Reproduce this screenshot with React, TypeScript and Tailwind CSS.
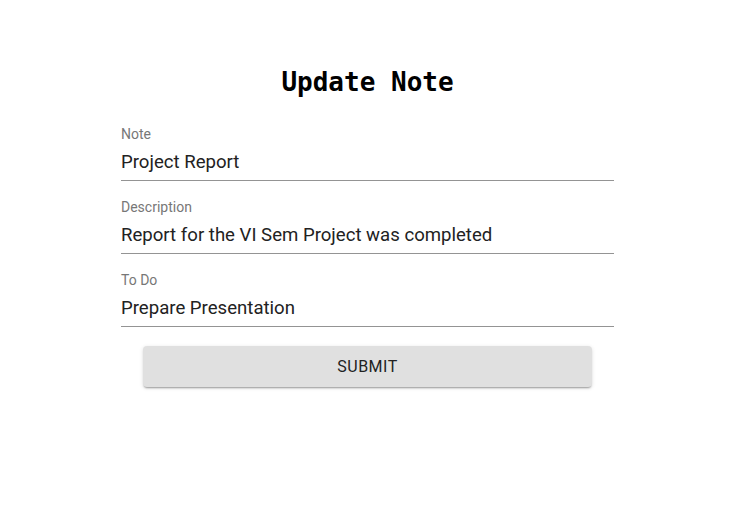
import React from 'react';

const fields = [
  { label: 'Note', value: 'Project Report' },
  { label: 'Description', value: 'Report for the VI Sem Project was completed' },
  { label: 'To Do', value: 'Prepare Presentation' },
];

const App: React.FC = () => {
  return (
    <div className="min-h-[520px] w-full bg-white font-['Roboto',sans-serif]">
      <div className="ml-[121px] w-[493px] pt-[63px]">
        <h1 className="text-center font-['DejaVu_Sans_Mono',monospace] text-[26px] font-bold leading-[38px] text-black">
          Update Note
        </h1>

        <div className="mt-[25px] flex flex-col gap-[18px]">
          {fields.map((f) => (
            <div key={f.label} className="flex flex-col">
              <label className="text-[14px] leading-[16px] text-[#777]">{f.label}</label>
              <div className="mt-[8px] border-b border-[#949494] pb-[6px] text-[18.6px] leading-[24px] text-[#222]">
                {f.value}
              </div>
            </div>
          ))}
        </div>

        <div className="mt-[19px] flex justify-center">
          <button className="h-[41px] w-[449px] rounded-[4px] bg-[#e0e0e0] text-[16px] leading-[20px] tracking-[0.5px] text-[#222] shadow-[0_2px_2px_-1px_rgba(0,0,0,0.35),0_1px_4px_rgba(0,0,0,0.12)]">
            SUBMIT
          </button>
        </div>
      </div>
    </div>
  );
};

export default App;
